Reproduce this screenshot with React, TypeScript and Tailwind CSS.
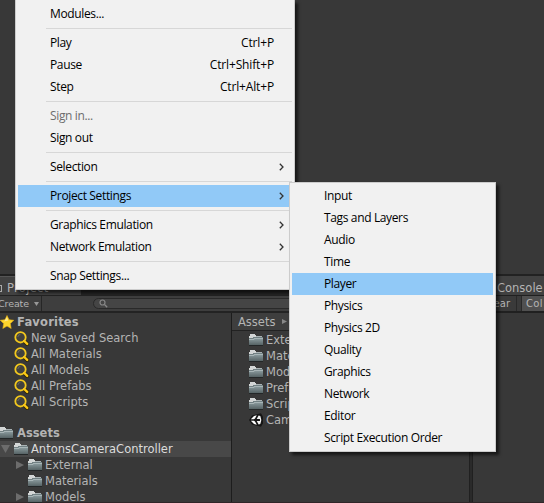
import React from "react";

type Entry = { label: string; keys?: string; sub?: boolean; active?: boolean; disabled?: boolean } | null;

const mainMenu: Entry[] = [
  { label: "Modules..." },
  null,
  { label: "Play", keys: "Ctrl+P" },
  { label: "Pause", keys: "Ctrl+Shift+P" },
  { label: "Step", keys: "Ctrl+Alt+P" },
  null,
  { label: "Sign in...", disabled: true },
  { label: "Sign out" },
  null,
  { label: "Selection", sub: true },
  null,
  { label: "Project Settings", sub: true, active: true },
  null,
  { label: "Graphics Emulation", sub: true },
  { label: "Network Emulation", sub: true },
  null,
  { label: "Snap Settings..." },
];

const settings = [
  "Input", "Tags and Layers", "Audio", "Time", "Player", "Physics",
  "Physics 2D", "Quality", "Graphics", "Network", "Editor", "Script Execution Order",
];

function Folder() {
  return (
    <svg width="14" height="12" viewBox="0 0 14 12" className="shrink-0">
      <defs>
        <linearGradient id="folder" x1="0" y1="0" x2="0" y2="1">
          <stop offset="0" stopColor="#87979a" />
          <stop offset="1" stopColor="#566365" />
        </linearGradient>
      </defs>
      <path d="M0 2h1V0h5v1h1v1h6v1h1v8H0z" fill="#718083" />
      <path d="M1 0h5v1h1v2H4v1H0V2h1z" fill="#d3d6d6" />
      <rect x="7" y="2" width="6" height="1" fill="#a9b2b4" />
      <rect x="0" y="5" width="14" height="6" fill="url(#folder)" />
      <path d="M0 5.5h5v-1h9" fill="none" stroke="#a8b5b7" strokeWidth="1" />
      <rect x="0" y="11" width="14" height="1" fill="#232728" />
    </svg>
  );
}

function Magnifier() {
  return (
    <svg width="15" height="15" viewBox="0 0 15 15" className="shrink-0">
      <path d="M10 10l3.2 3" stroke="#2c2508" strokeWidth="3.8" strokeLinecap="round" />
      <circle cx="6.5" cy="6.3" r="5.2" fill="#41413e" stroke="#f2c81e" strokeWidth="1.8" />
      <path d="M3.8 6a3 3 0 0 1 2.6-2.6" fill="none" stroke="#6b6a62" />
      <path d="M10.2 10l3 2.9" stroke="#fbc817" strokeWidth="2.4" strokeLinecap="round" />
    </svg>
  );
}

function Star() {
  return (
    <svg width="14" height="14" viewBox="0 0 14 14" className="shrink-0">
      <path d="M7 .5l2 4.2 4.8.6-3.5 3.3.9 4.9L7 11.1l-4.2 2.4.9-4.9L.2 5.3 5 4.7z" fill="#fdd52c" stroke="#eab414" strokeWidth=".6" />
      <path d="M7 2l1.2 3.6L4 6.6z" fill="#ffe98a" />
    </svg>
  );
}

function Unity() {
  return (
    <svg width="14" height="14" viewBox="0 0 14 14" className="shrink-0">
      <path d="M0 7L3 2.6 12 .2l2 3.5v6.6l-2 3.5L3 11.4z" fill="#151515" />
      <path d="M1.8 6.2L5 3l2.8-.8L6 5.6l-1 .6zM1.8 7.8L5 11l2.8.8L6 8.4l-1-.6z" fill="#fff" />
      <path d="M9.6 2.6l1.7.3.9 3.3v1.6l-.9 3.3-1.7.3-1.9-3.3h3.2V5.9H7.7z" fill="#f4f4f4" />
      <path d="M7.7 7H11" stroke="#151515" />
    </svg>
  );
}

function Chevron() {
  return (
    <svg width="5" height="8" viewBox="0 0 5 8">
      <path d="M.8.7L4 4 .8 7.3" fill="none" stroke="#333" strokeWidth="1.3" />
    </svg>
  );
}

const row = "flex h-4 shrink-0 items-center whitespace-nowrap";

function TreeFolder({ name, arrow }: { name: string; arrow?: boolean }) {
  return (
    <div className={`${row} pl-4`}>
      <svg width="8" height="8" viewBox="0 0 8 8" className="shrink-0">
        {arrow && <path d="M0 0l8 4-8 4z" fill="#6c6c6c" />}
      </svg>
      <span className="ml-1 mr-[3px]"><Folder /></span>
      <span>{name}</span>
    </div>
  );
}

function MainMenu() {
  return (
    <div className="absolute left-[15px] top-0 w-[280px] border-x border-b border-[#cccccc] bg-[#f1f1f1] px-[2px] pb-[2px] pt-[3px] shadow-[3px_3px_3px_rgba(0,0,0,0.6)]">
      {mainMenu.map((e, i) =>
        e === null ? (
          <div key={i} className="flex h-[7px] items-center pl-7">
            <div className="h-px w-full bg-[#d7d7d7]" />
          </div>
        ) : (
          <div
            key={i}
            className={`flex h-[22px] items-center justify-between pl-8 ${e.active ? "bg-[#91c9f7]" : ""} ${e.disabled ? "text-[#6d6d6d]" : "text-black"}`}
          >
            <span>{e.label}</span>
            {e.keys && <span className="pr-[18px] tracking-[-0.15px]">{e.keys}</span>}
            {e.sub && <span className="pr-[8px]"><Chevron /></span>}
          </div>
        )
      )}
    </div>
  );
}

function SubMenu() {
  return (
    <div className="absolute left-[289px] top-[182px] w-[207px] border border-[#cccccc] bg-[#f1f1f1] p-[2px] text-black shadow-[3px_3px_3px_rgba(0,0,0,0.6)]">
      {settings.map((s) => (
        <div key={s} className={`flex h-[22px] items-center pl-8 ${s === "Player" ? "bg-[#91c9f7]" : ""}`}>
          {s}
        </div>
      ))}
    </div>
  );
}

export default function App() {
  return (
    <div className="relative flex h-[503px] w-[544px] flex-col overflow-hidden bg-[#383838] font-['DejaVu_Sans',sans-serif] text-[11.5px] leading-4 text-[#b4b4b4]">
      <div className="h-[274px] shrink-0" />
      <div className="flex min-h-0 flex-1 border-b border-[#302628]">
        <section className="flex w-[469px] shrink-0 flex-col">
          <div className="flex h-[21px] shrink-0 border-t-2 border-[#222222] bg-[#252525]">
            <div className="flex w-[81px] items-center border-t border-[#555] bg-[#414141] pt-[4px]">
              <span className="h-[7px] w-[2px] border border-l-0 border-[#aaa]" />
              <span className="ml-[5px] tracking-[0.3px]">Project</span>
            </div>
          </div>
          <div className="flex h-[18px] shrink-0 items-center border-b-2 border-t border-[#232323] bg-[#3e3e3e]">
            <div className="-ml-[2px] flex h-full w-[44px] shrink-0 items-center border-r border-[#262626] text-[9.5px]">
              <span className="tracking-[-0.1px]">Create</span>
              <svg width="5" height="4" viewBox="0 0 5 4" className="ml-[5px]"><path d="M0 0h5L2.5 4z" fill="#999" /></svg>
            </div>
            <div className="ml-[51px] flex h-[11px] flex-1 items-center rounded-l-full border border-[#292929] bg-[#454545] pl-[5px]">
              <svg width="9" height="9" viewBox="0 0 9 9"><circle cx="3.5" cy="3.5" r="2.5" fill="none" stroke="#888" strokeWidth="1.2" /><path d="M5.5 5.5l2.7 2.7" stroke="#888" strokeWidth="1.3" /></svg>
            </div>
          </div>
          <div className="flex min-h-0 flex-1">
            <div className="flex w-[231px] shrink-0 flex-col pt-px">
              <div className={`${row} gap-[3px] font-bold tracking-[0.2px]`}><Star /><span>Favorites</span></div>
              {["New Saved Search", "All Materials", "All Models", "All Prefabs", "All Scripts"].map((n) => (
                <div key={n} className={`${row} gap-[2px] pl-[14px]`}><Magnifier /><span>{n}</span></div>
              ))}
              <div className="h-[15px] shrink-0" />
              <div className={`${row} gap-1 font-bold`}><span className="-ml-px"><Folder /></span><span>Assets</span></div>
              <div className={`${row} bg-[#484848] pl-px text-[#dcdcdc]`}>
                <svg width="9" height="8" viewBox="0 0 9 8"><path d="M0 0h9L4.5 8z" fill="#6c6c6c" /></svg>
                <span className="ml-1 mr-[3px]"><Folder /></span>
                <span>AntonsCameraController</span>
              </div>
              <TreeFolder name="External" arrow />
              <TreeFolder name="Materials" />
              <TreeFolder name="Models" arrow />
            </div>
            <div className="flex min-w-0 flex-1 flex-col border-l border-[#1d1d1d]">
              <div className="flex h-[18px] shrink-0 items-center gap-[7px] border-b border-[#222] bg-[#3e3e3e] pl-[6px]">
                <span>Assets</span>
                <svg width="5" height="5" viewBox="0 0 5 5"><path d="M0 0l5 2.5L0 5z" fill="#888" /></svg>
              </div>
              <div className="pl-[17px] pt-px">
                {["External", "Materials", "Models", "Prefabs", "Scripts"].map((n) => (
                  <div key={n} className={`${row} gap-[3px]`}><Folder /><span>{n}</span></div>
                ))}
                <div className={`${row} gap-[3px]`}><Unity /><span>Camera</span></div>
              </div>
            </div>
          </div>
        </section>
        <div className="mt-[2px] w-1 shrink-0 border-x border-[#202020] bg-[#2a2a2a]" />
        <section className="flex w-[71px] shrink-0 flex-col overflow-hidden">
          <div className="flex h-[21px] shrink-0 items-center border-t-2 border-[#222] bg-[#414141] pl-6 pt-[5px]">Console</div>
          <div className="flex h-[18px] shrink-0 border-b-2 border-t border-[#202020] bg-[#3a3a3a] text-[10px]">
            <div className="flex w-[43px] shrink-0 items-center justify-end pr-[6px]">Clear</div>
            <div className="w-[6px] shrink-0 border-x border-[#292929]" />
            <div className="flex flex-1 items-center bg-[#505050] pl-1 tracking-[0.3px]">Col</div>
          </div>
        </section>
      </div>
      <div className="font-['Open_Sans','Noto_Sans',sans-serif] text-[12px] tracking-[-0.36px]">
        <MainMenu />
        <SubMenu />
      </div>
    </div>
  );
}
